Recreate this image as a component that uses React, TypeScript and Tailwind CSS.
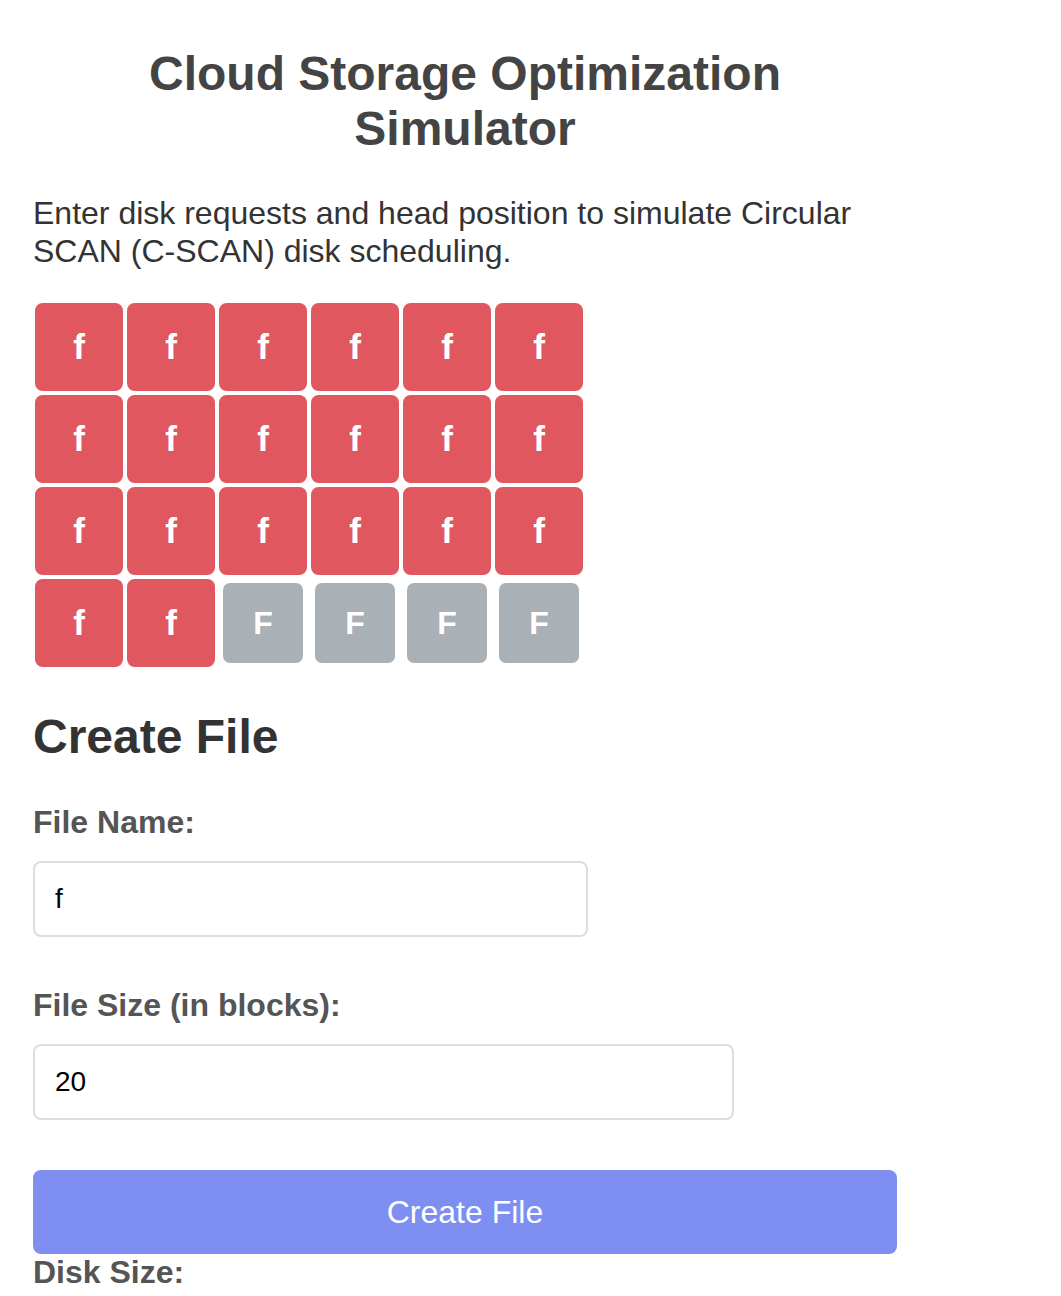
import { useState } from "react";

const blocks = Array.from({ length: 24 }, (_, i) => (i < 20 ? "f" : null));

export default function App() {
  const [name, setName] = useState("f");
  const [size, setSize] = useState("20");

  return (
    <div className="min-h-screen bg-white font-['Liberation_Sans',Arial,sans-serif]">
      <div className="w-[864px] ml-[33px] pt-[46px]">
        <h1 className="text-center text-[48px] leading-[1.15] font-bold text-[#444]">
          Cloud Storage Optimization
          <br />
          Simulator
        </h1>

        <p className="mt-[39px] text-[32px] leading-[37.7px] text-[#333]">
          Enter disk requests and head position to simulate Circular SCAN (C-SCAN) disk scheduling.
        </p>

        <div className="mt-[30px] flex flex-wrap w-[552px]">
          {blocks.map((b, i) =>
            b ? (
              <div
                key={i}
                className="m-[6px] w-20 h-20 rounded-[7px] bg-[#e15760] scale-110 flex items-center justify-center text-white text-[32px] font-bold"
              >
                {b}
              </div>
            ) : (
              <div
                key={i}
                className="m-[6px] w-20 h-20 rounded-[7px] bg-[#a9b1b6] flex items-center justify-center text-white text-[32px] font-bold"
              >
                F
              </div>
            )
          )}
        </div>

        <h2 className="mt-[40px] text-[48px] leading-[1.15] font-bold text-[#333]">Create File</h2>

        <label className="block mt-[40px] text-[32px] leading-[1.15] font-bold text-[#555]">File Name:</label>
        <input
          type="text"
          value={name}
          onChange={(e) => setName(e.target.value)}
          className="block mt-[20px] w-[555px] h-[76px] px-[20px] border-2 border-[#ddd] rounded-[8px] text-[28px] text-black outline-none"
        />

        <label className="block mt-[50px] text-[32px] leading-[1.15] font-bold text-[#555]">
          File Size (in blocks):
        </label>
        <input
          type="text"
          value={size}
          onChange={(e) => setSize(e.target.value)}
          className="block mt-[20px] w-[701px] h-[76px] px-[20px] border-2 border-[#ddd] rounded-[8px] text-[28px] text-black outline-none"
        />

        <button className="block mt-[50px] w-full h-[84px] rounded-[8px] bg-[#7e8ef1] text-white text-[32px] leading-[1.15] pt-[2px]">
          Create File
        </button>
        <label className="block text-[32px] leading-[1.15] font-bold text-[#555]">Disk Size:</label>
      </div>
    </div>
  );
}
